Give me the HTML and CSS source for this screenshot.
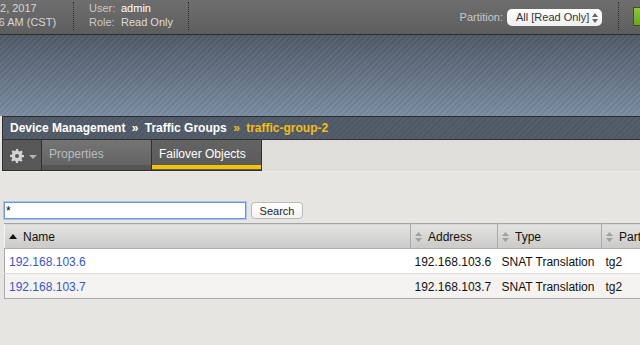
FILE: index.html
```html
<!DOCTYPE html>
<html lang="en">

<head>
    <meta charset="UTF-8">
    <title>Traffic Groups</title>
    <link rel="stylesheet" href="styles.css">
</head>

<body>
    <div class="topbar">
        <div class="datebox">
            <div>Feb 2, 2017</div>
            <div>11:36 AM (CST)</div>
        </div>
        <div class="sep"></div>
        <div class="userbox">
            <div><span class="lbl">User:</span><span class="val">admin</span></div>
            <div><span class="lbl">Role:</span><span class="val dim">Read Only</span></div>
        </div>
        <div class="sep"></div>
        <div class="spacer"></div>
        <div class="partition">
            <span class="lbl">Partition:</span>
            <div class="select">All [Read Only]
                <svg class="updown" width="6" height="10" viewBox="0 0 6 10">
                    <path fill="#666" d="M3 0l3 4H0zM3 10L0 6h6z"/>
                </svg>
            </div>
        </div>
        <div class="sep"></div>
        <div class="status"></div>
    </div>

    <div class="banner">
        <div class="crumbs">
            <span>Device Management</span>
            <span class="raq">&raquo;</span>
            <span>Traffic Groups</span>
            <span class="raq cur">&raquo;</span>
            <span class="cur">traffic-group-2</span>
        </div>
    </div>

    <div class="tabs">
        <div class="tab gear">
            <svg width="14" height="14" viewBox="0 0 14 14">
                <path fill="#d4d4d4" d="M6 0h2l.4 2a5 5 0 0 1 1.3.6l1.7-1.1 1.4 1.4-1.1 1.7a5 5 0 0 1 .6 1.3L14 6v2l-2 .4a5 5 0 0 1-.6 1.3l1.1 1.7-1.4 1.4-1.7-1.1a5 5 0 0 1-1.3.6L8 14H6l-.4-2a5 5 0 0 1-1.3-.6l-1.7 1.1-1.4-1.4 1.1-1.7a5 5 0 0 1-.6-1.3L0 8V6l2-.4a5 5 0 0 1 .6-1.3L1.5 2.6 2.9 1.2l1.7 1.1A5 5 0 0 1 5.6 1.7z"/>
                <circle cx="7" cy="7" r="2" fill="#575757"/>
            </svg>
            <span class="caret"></span>
        </div>
        <div class="tab">Properties</div>
        <div class="tab active">Failover Objects</div>
    </div>

    <div class="content">
        <form class="search">
            <input type="text" value="*" class="query">
            <button type="button" class="btn">Search</button>
        </form>

        <table class="grid">
            <colgroup>
                <col width="406">
                <col width="87">
                <col width="104">
                <col width="110">
            </colgroup>
            <tr>
                <th>
                    <svg class="sorted" width="8" height="5" viewBox="0 0 8 5"><path fill="#111" d="M4 0l4 5H0z"/></svg>Name
                </th>
                <th>
                    <svg class="sort" width="7" height="10" viewBox="0 0 7 10"><path fill="#a0a0a0" d="M3.5 0L7 4H0zM3.5 10L0 6h7z"/></svg>Address
                </th>
                <th>
                    <svg class="sort" width="7" height="10" viewBox="0 0 7 10"><path fill="#a0a0a0" d="M3.5 0L7 4H0zM3.5 10L0 6h7z"/></svg>Type
                </th>
                <th>
                    <svg class="sort" width="7" height="10" viewBox="0 0 7 10"><path fill="#a0a0a0" d="M3.5 0L7 4H0zM3.5 10L0 6h7z"/></svg>Partition
                </th>
            </tr>
            <tr>
                <td><a href="#">192.168.103.6</a></td>
                <td>192.168.103.6</td>
                <td>SNAT Translation</td>
                <td>tg2</td>
            </tr>
            <tr class="alt">
                <td><a href="#">192.168.103.7</a></td>
                <td>192.168.103.7</td>
                <td>SNAT Translation</td>
                <td>tg2</td>
            </tr>
        </table>
    </div>
</body>

</html>
```

FILE: styles.css
```css
html,
body {
    width: 100%;
    height: 100%;
    padding: 0;
    margin: 0;
    overflow: hidden;
}

body {
    background: #e6e5e1;
    font: 11px "Liberation Sans", Arial, sans-serif;
}

.topbar {
    display: flex;
    height: 34px;
    border-bottom: 1px solid #2e2e2e;
    background: linear-gradient(#6e6e6e, #5e5e5e);
    color: #d6d6d6;
    overflow: hidden;
}

.datebox {
    margin-left: -22px;
    width: 95px;
    padding-top: 1px;
    line-height: 14px;
    white-space: nowrap;
}

.sep {
    width: 0;
    margin: 2px 0 4px;
    border-left: 1px dotted #2c2c2c;
}

.userbox {
    width: 99px;
    padding: 1px 0 0 15px;
    line-height: 14px;
}

.lbl {
    color: #c9c9c9;
}

.userbox .lbl {
    display: inline-block;
    width: 32px;
}

.val {
    color: #fff;
}

.val.dim {
    color: #dcdcdc;
}

.spacer {
    flex: 1;
}

.partition {
    display: flex;
    align-items: center;
    gap: 4px;
    padding-right: 16px;
}

.select {
    position: relative;
    width: 86px;
    height: 17px;
    padding-left: 9px;
    line-height: 17px;
    border-radius: 5px;
    background: linear-gradient(#ffffff, #f0f0f0);
    color: #333;
}

.updown {
    position: absolute;
    right: 4px;
    top: 4px;
}

.status {
    width: 6px;
    margin: 7px 0 0 14px;
    height: 17px;
    border: 1px solid #3a5a14;
    border-right: 0;
    background: linear-gradient(#8cc63f, #6aa51e);
}

.banner {
    height: 81px;
    position: relative;
    background:
        repeating-linear-gradient(135deg, rgba(255, 255, 255, 0.03) 0 2px, rgba(0, 0, 0, 0.05) 2px 4px),
        linear-gradient(#505b69, #7c8da2);
}

.crumbs {
    position: absolute;
    left: 2px;
    right: 0;
    bottom: -24px;
    height: 22px;
    padding-left: 7px;
    border-top: 1px solid #2b2b2b;
    border-bottom: 1px solid #2f2f2f;
    border-left: 1px solid #2f2f2f;
    background:
        repeating-linear-gradient(135deg, rgba(255, 255, 255, 0.02) 0 2px, rgba(0, 0, 0, 0.04) 2px 4px),
        #525c69;
    color: #fff;
    font-weight: bold;
    font-size: 12px;
    line-height: 22px;
    white-space: nowrap;
}

.raq {
    margin: 0 3px;
}

.cur {
    color: #f5be14;
}

.tabs {
    display: flex;
    height: 31px;
    margin: 24px 0 0 2px;
    background: #dfdedb;
    border-bottom: 1px solid #ecebe8;
}

.tab {
    box-sizing: border-box;
    width: 110px;
    padding: 7px 0 0 7px;
    border: 1px solid #2f2f2f;
    border-top: 0;
    border-left: 0;
    background: linear-gradient(#747474, #646464 83%, #555 83%, #555);
    color: #b8bcc2;
    font-size: 12px;
}

.tab.gear {
    display: flex;
    align-items: flex-start;
    gap: 5px;
    width: 40px;
    padding: 9px 0 0 7px;
    border-left: 1px solid #2f2f2f;
    background: #575757;
}

.caret {
    margin-top: 6px;
    border: 4px solid transparent;
    border-top: 4px solid #b4b4b4;
    border-bottom: 0;
}

.tab.active {
    background: linear-gradient(#636363, #5c5c5c 83%, #f5c400 83%, #f5c400 97%, #5c5c5c 97%);
    color: #fff;
}

.content {
    padding: 30px 0 0 4px;
}

.search {
    display: flex;
    gap: 4px;
    margin: 0;
}

.query {
    width: 238px;
    height: 15px;
    margin: 0;
    padding: 0 1px;
    border: 1px solid #6a96d8;
    box-shadow: 0 0 0 1px #a9c6ee;
    font: 12px "Liberation Sans", Arial, sans-serif;
    outline: none;
}

.btn {
    width: 52px;
    height: 17px;
    margin: 0 0 0 1px;
    padding: 0;
    border: 1px solid #b9b9b9;
    border-radius: 4px;
    background: linear-gradient(#ffffff, #f2f2f2);
    font: 11px "Liberation Sans", Arial, sans-serif;
    color: #222;
}

.grid {
    margin-top: 4px;
    width: 707px;
    table-layout: fixed;
    border-collapse: collapse;
    border-left: 1px solid #a9a9a9;
    border-bottom: 1px solid #a9a9a9;
    font-size: 12px;
}

.grid th {
    height: 23px;
    padding: 1px 0 0 4px;
    text-align: left;
    font-weight: normal;
    color: #111;
    border-top: 1px solid #a4a4a4;
    border-left: 1px solid #f4f4f4;
    border-right: 1px solid #a9a9a9;
    border-bottom: 1px solid #b0b0b0;
    background: linear-gradient(#e3e3e1, #cbcac7);
    white-space: nowrap;
}

.sorted {
    margin: 0 6px 1px 0;
    vertical-align: middle;
}

.sort {
    margin: 0 6px 1px 0;
    vertical-align: middle;
}

.grid td {
    height: 23px;
    padding: 1px 0 0 4px;
    background: #fff;
    border-bottom: 1px solid #dcdcdc;
    white-space: nowrap;
    color: #111;
}

.grid tr.alt td {
    background: #f4f3f1;
    border-bottom: 0;
}

.grid a {
    color: #3b55c8;
    text-decoration: none;
}
```
